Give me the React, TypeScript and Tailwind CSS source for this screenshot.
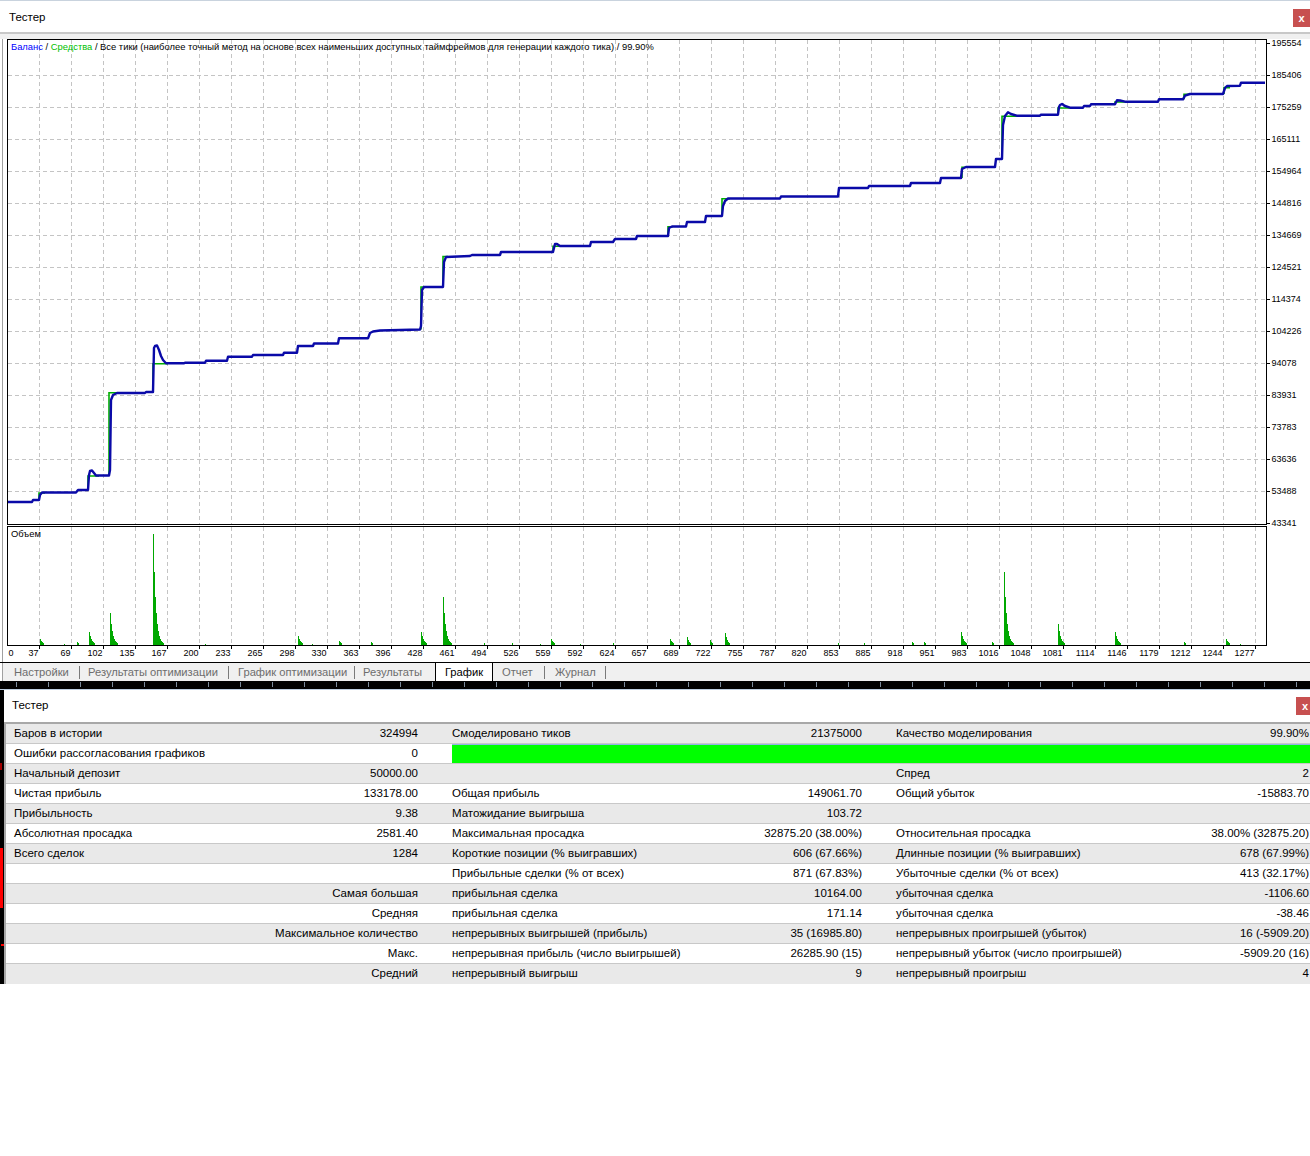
import React from "react";

const xLabels = [
  "37", "69", "102", "135", "167", "200", "233", "265", "298", "330", "363", "396", "428",
  "461", "494", "526", "559", "592", "624", "657", "689", "722", "755", "787", "820", "853",
  "885", "918", "951", "983", "1016", "1048", "1081", "1114", "1146", "1179", "1212", "1244", "1277",
];

const yLabels = [
  "195554", "185406", "175259", "165111", "154964", "144816", "134669", "124521",
  "114374", "104226", "94078", "83931", "73783", "63636", "53488", "43341",
];

// balance line, page coordinates
const balance: [number, number][] = [
  [8, 502], [32, 502], [33, 500], [39, 500], [40, 495], [42, 492.5], [76, 492.5], [78, 490],
  [88, 490], [89, 475], [90, 471], [92, 470.5], [94, 473], [96, 475.5], [109, 475.5], [110, 470],
  [111, 400], [113, 395], [117, 393], [145, 393], [146, 392], [153, 392], [154, 348], [155, 346],
  [157, 345.5], [159, 350], [161, 356], [163, 360], [166, 363.3], [184, 363.3], [185, 362.7],
  [205, 362.7], [206, 360.7], [227, 360.7], [228, 356.7], [252, 356.7], [253, 355], [283, 355],
  [284, 352.7], [297, 352.7], [298, 346], [313, 346], [314, 343.5], [338, 343.5], [339, 338.3],
  [368, 338.3], [370, 333], [373, 331.5], [380, 330.5], [420, 329.5], [421, 326], [422, 290],
  [424, 287], [443, 287], [444, 262], [446, 257], [470, 256], [472, 255], [500, 255], [501, 252],
  [553, 252], [555, 244], [557, 244], [560, 246], [590, 246], [591, 242], [613, 242], [615, 239],
  [636, 239], [637, 236], [668, 236], [669, 228], [672, 226.5], [686, 226.5], [687, 222],
  [705, 222], [706, 216], [722, 216], [723, 206], [725, 201], [728, 198.5], [780, 198.5],
  [781, 196.5], [838, 196.5], [839, 188], [868, 188], [869, 186], [910, 186], [911, 183],
  [940, 183], [941, 178], [961, 178], [962, 169], [966, 167], [995, 167], [996, 159], [1002, 159],
  [1003, 125], [1005, 116], [1008, 112.3], [1011, 114], [1016.7, 115.7], [1040, 115.7],
  [1041, 114.7], [1058, 114.7], [1059, 107], [1060, 105], [1062, 104], [1065, 106], [1070, 107.7],
  [1083, 107.7], [1084, 106], [1090, 106], [1091, 104.3], [1115, 104.3], [1117, 100.3],
  [1120, 100.5], [1125, 101.7], [1158, 101.7], [1159, 99.3], [1183, 99.3], [1185, 95.7],
  [1190, 94], [1223, 94], [1225, 88], [1227, 86], [1240, 85.7], [1241, 82.7], [1265, 82.7],
];

// equity only shows where the balance overshoots or rounds a corner
const equity: [number, number][][] = [
  [[39, 500], [39, 493], [45, 493]],
  [[88, 490], [88, 476], [99, 476]],
  [[109, 476], [109, 392.8], [119, 392.8]],
  [[153, 392], [153, 363.8], [168, 363.8]],
  [[421, 329.5], [421, 287], [425, 287]],
  [[443, 287], [443, 256.5], [448, 256.5]],
  [[553, 252], [553, 246.3], [562, 246.3]],
  [[668, 236], [668, 226.8], [673, 226.8]],
  [[722, 216], [722, 198.8], [730, 198.8]],
  [[962, 178], [962, 167.3], [967, 167.3]],
  [[1002, 159], [1002, 116.2], [1018, 116.2]],
  [[1058, 114.7], [1058, 108], [1071, 108]],
  [[1115, 104.3], [1115, 102], [1127, 102]],
  [[1184, 99.3], [1184, 94.3], [1191, 94.3]],
  [[1224, 94], [1224, 87.6], [1230, 87.6]],
];

const spikes: [number, number][] = [
  [40, 6], [64, 1], [77, 3], [89, 13], [110, 32], [153, 111], [205, 1], [298, 9], [312, 1],
  [339, 4], [371, 3], [421, 13], [443, 48], [484, 2], [512, 2], [540, 1], [551, 6], [580, 1],
  [613, 2], [670, 6], [687, 8], [710, 5], [725, 12], [838, 2], [864, 2], [912, 3], [924, 3],
  [961, 13], [992, 3], [1004, 73], [1058, 21], [1115, 13], [1184, 3], [1226, 6], [1240, 1],
];

const toPoints = (pts: [number, number][]) => pts.map(([x, y]) => `${x},${y}`).join(" ");

function volumeBars() {
  const bars: React.ReactNode[] = [];
  spikes.forEach(([x0, peak]) => {
    let h = peak;
    let i = 0;
    while (h >= 1) {
      bars.push(<rect key={`${x0}-${i}`} x={x0 + i} y={645 - h} width={1} height={h} fill="#00a800" />);
      if (h < 3) break;
      h = Math.round(h * 0.66);
      i++;
    }
  });
  return bars;
}

function Chart() {
  const gridX = Array.from({ length: 39 }, (_, k) => 39 + 32 * k);
  const gridY = Array.from({ length: 16 }, (_, k) => 43 + 32 * k);
  return (
    <svg width={1310} height={623} className="block font-['Liberation_Sans',Arial,sans-serif]">
      <g transform="translate(0,-39)">
        <rect x={0} y={39} width={1310} height={623} fill="#ffffff" />
        <line x1={2.5} y1={39} x2={2.5} y2={662} stroke="#a0a0a0" />
        {gridY.slice(1, 15).map((y) => (
          <line key={y} x1={8} x2={1266} y1={y + 0.5} y2={y + 0.5} stroke="#c4c4c4" strokeDasharray="4 3" />
        ))}
        {gridX.map((x) => (
          <g key={x}>
            <line x1={x + 0.5} x2={x + 0.5} y1={40} y2={524} stroke="#c4c4c4" strokeDasharray="4 3" />
            <line x1={x + 0.5} x2={x + 0.5} y1={527} y2={645} stroke="#c4c4c4" strokeDasharray="4 3" />
            <line x1={x + 0.5} x2={x + 0.5} y1={646} y2={649} stroke="#000" />
          </g>
        ))}
        {volumeBars()}
        {equity.map((seg, i) => (
          <polyline key={i} points={toPoints(seg)} fill="none" stroke="#00b000" strokeWidth={1.6} />
        ))}
        <polyline
          points={toPoints(balance)}
          fill="none"
          stroke="#0a0aa8"
          strokeWidth={2.4}
          strokeLinejoin="round"
        />
        <rect x={7.5} y={39.5} width={1259} height={485} fill="none" stroke="#000" />
        <rect x={7.5} y={526.5} width={1259} height={119} fill="none" stroke="#000" />
        {gridY.map((y, k) => (
          <g key={y}>
            <line x1={1267} x2={1270} y1={y + 0.5} y2={y + 0.5} stroke="#000" />
            <text x={1271.5} y={y + 2.5} fontSize={9} fill="#000">
              {yLabels[k]}
            </text>
          </g>
        ))}
        <text x={8.5} y={655.5} fontSize={9} fill="#000">
          0
        </text>
        {gridX.map((x, k) => (
          <text key={x} x={x - 0.5} y={655.5} fontSize={9} fill="#000" textAnchor="end">
            {xLabels[k]}
          </text>
        ))}
        <text x={11} y={50} fontSize={9.4} fill="#000" className="whitespace-pre">
          <tspan fill="#0000ff">Баланс</tspan>
          <tspan> / </tspan>
          <tspan fill="#00c000">Средства</tspan>
          <tspan>
            {" / Все тики (наиболее точный метод на основе всех наименьших доступных таймфреймов для генерации каждого тика) / 99.90%"}
          </tspan>
        </text>
        <text x={11} y={537} fontSize={9.4} fill="#000">
          Объем
        </text>
      </g>
    </svg>
  );
}

function Tabs() {
  const sep = <div className="h-[13px] w-px shrink-0 self-center bg-[#7a7a7a]" />;
  return (
    <div className="ml-[2px] flex h-[18px] items-stretch border-l border-[#a0a0a0] bg-[#f0f0f0] text-[11.2px] text-[#6d6d6d]">
      <div className="flex w-[76px] shrink-0 items-center pl-[11px]">Настройки</div>
      {sep}
      <div className="flex w-[148px] shrink-0 items-center pl-[8px]">Результаты оптимизации</div>
      {sep}
      <div className="flex w-[125px] shrink-0 items-center pl-[9px]">График оптимизации</div>
      {sep}
      <div className="flex w-[80px] shrink-0 items-center pl-[8px]">Результаты</div>
      <div className="flex w-[58px] shrink-0 items-center justify-center border-x border-black bg-white text-black">
        График
      </div>
      <div className="flex w-[51px] shrink-0 items-center pl-[9px]">Отчет</div>
      {sep}
      <div className="flex w-[60px] shrink-0 items-center pl-[10px]">Журнал</div>
      {sep}
    </div>
  );
}

function Ruler() {
  return (
    <div className="flex h-[8px] overflow-hidden bg-black pl-[16px]">
      {Array.from({ length: 41 }, (_, i) => (
        <div key={i} className="w-[32px] shrink-0">
          <div className="mt-px h-[5px] w-px bg-[#7d8c9c]" />
        </div>
      ))}
    </div>
  );
}

type Row = {
  l1?: string;
  v1?: string;
  l2?: string;
  v2?: string;
  l3?: string;
  v3?: string;
  bar?: boolean;
};

const rows: Row[] = [
  { l1: "Баров в истории", v1: "324994", l2: "Смоделировано тиков", v2: "21375000", l3: "Качество моделирования", v3: "99.90%" },
  { l1: "Ошибки рассогласования графиков", v1: "0", bar: true },
  { l1: "Начальный депозит", v1: "50000.00", l3: "Спред", v3: "2" },
  { l1: "Чистая прибыль", v1: "133178.00", l2: "Общая прибыль", v2: "149061.70", l3: "Общий убыток", v3: "-15883.70" },
  { l1: "Прибыльность", v1: "9.38", l2: "Матожидание выигрыша", v2: "103.72" },
  { l1: "Абсолютная просадка", v1: "2581.40", l2: "Максимальная просадка", v2: "32875.20 (38.00%)", l3: "Относительная просадка", v3: "38.00% (32875.20)" },
  { l1: "Всего сделок", v1: "1284", l2: "Короткие позиции (% выигравших)", v2: "606 (67.66%)", l3: "Длинные позиции (% выигравших)", v3: "678 (67.99%)" },
  { l2: "Прибыльные сделки (% от всех)", v2: "871 (67.83%)", l3: "Убыточные сделки (% от всех)", v3: "413 (32.17%)" },
  { v1: "Самая большая", l2: "прибыльная сделка", v2: "10164.00", l3: "убыточная сделка", v3: "-1106.60" },
  { v1: "Средняя", l2: "прибыльная сделка", v2: "171.14", l3: "убыточная сделка", v3: "-38.46" },
  { v1: "Максимальное количество", l2: "непрерывных выигрышей (прибыль)", v2: "35 (16985.80)", l3: "непрерывных проигрышей (убыток)", v3: "16 (-5909.20)" },
  { v1: "Макс.", l2: "непрерывная прибыль (число выигрышей)", v2: "26285.90 (15)", l3: "непрерывный убыток (число проигрышей)", v3: "-5909.20 (16)" },
  { v1: "Средний", l2: "непрерывный выигрыш", v2: "9", l3: "непрерывный проигрыш", v3: "4" },
];

function Report() {
  return (
    <div className="flex">
      <div className="flex w-[4px] shrink-0 flex-col bg-black">
        <div className="h-[73px]" />
        <div className="h-[7px] w-[2px] bg-[#a00000]" />
        <div className="h-[78px]" />
        <div className="h-[60px] w-[3px] bg-[#ff0000]" />
        <div className="h-[36px]" />
        <div className="ml-[1px] h-[2px] w-[3px] bg-[#ff0000]" />
        <div className="flex-1" />
      </div>
      <div className="w-[1328px] shrink-0 bg-white text-[11.5px] text-black">
        <div className="flex h-[32px] items-center pl-[8px] pr-[18px]">
          <span>Тестер</span>
          <div className="ml-auto flex h-[18px] w-[18px] items-center justify-center bg-[#c75050] text-[11px] font-bold leading-none text-white">
            x
          </div>
        </div>
        <div className="border-l-2 border-t-2 border-[#a8a8a8]">
          {rows.map((r, i) => (
            <div
              key={i}
              className={`flex h-[20px] ${i < rows.length - 1 ? "border-b border-[#c8c8c8]" : ""} ${
                i % 2 === 0 ? "bg-[#e9e9e9]" : "bg-white"
              }`}
            >
              <div className="flex w-[430px] shrink-0 items-center justify-between pl-[8px] pr-[18px]">
                <span>{r.l1}</span>
                <span>{r.v1}</span>
              </div>
              {r.bar ? (
                <div className="flex flex-1 pl-[16px]">
                  <div className="flex-1 border-t border-[#8fb6e6] bg-[#00ff00]" />
                </div>
              ) : (
                <>
                  <div className="flex w-[444px] shrink-0 items-center justify-between pl-[16px] pr-[18px]">
                    <span>{r.l2}</span>
                    <span>{r.v2}</span>
                  </div>
                  <div className="flex w-[450px] shrink-0 items-center justify-between pl-[16px] pr-[21px]">
                    <span>{r.l3}</span>
                    <span>{r.v3}</span>
                  </div>
                </>
              )}
            </div>
          ))}
        </div>
      </div>
    </div>
  );
}

export default function App() {
  return (
    <div className="h-[1156px] w-[1310px] overflow-hidden bg-white font-['Liberation_Sans',Arial,sans-serif] text-black">
      <div className="h-px bg-[#c9d3de]" />
      <div className="flex h-[31px] items-start bg-white pl-[9px]">
        <span className="mt-[8px] text-[11.5px]">Тестер</span>
        <div className="ml-auto mt-[8px] flex h-[18px] w-[17px] items-center justify-center bg-[#c75050] text-[11px] font-bold leading-none text-white">
          x
        </div>
      </div>
      <div className="h-[2px] bg-[#c8c8c8]" />
      <div className="h-[5px] bg-[#f0f0f0]" />
      <Chart />
      <div className="h-px bg-black" />
      <Tabs />
      <Ruler />
      <div className="h-px bg-[#bccddf]" />
      <Report />
    </div>
  );
}
